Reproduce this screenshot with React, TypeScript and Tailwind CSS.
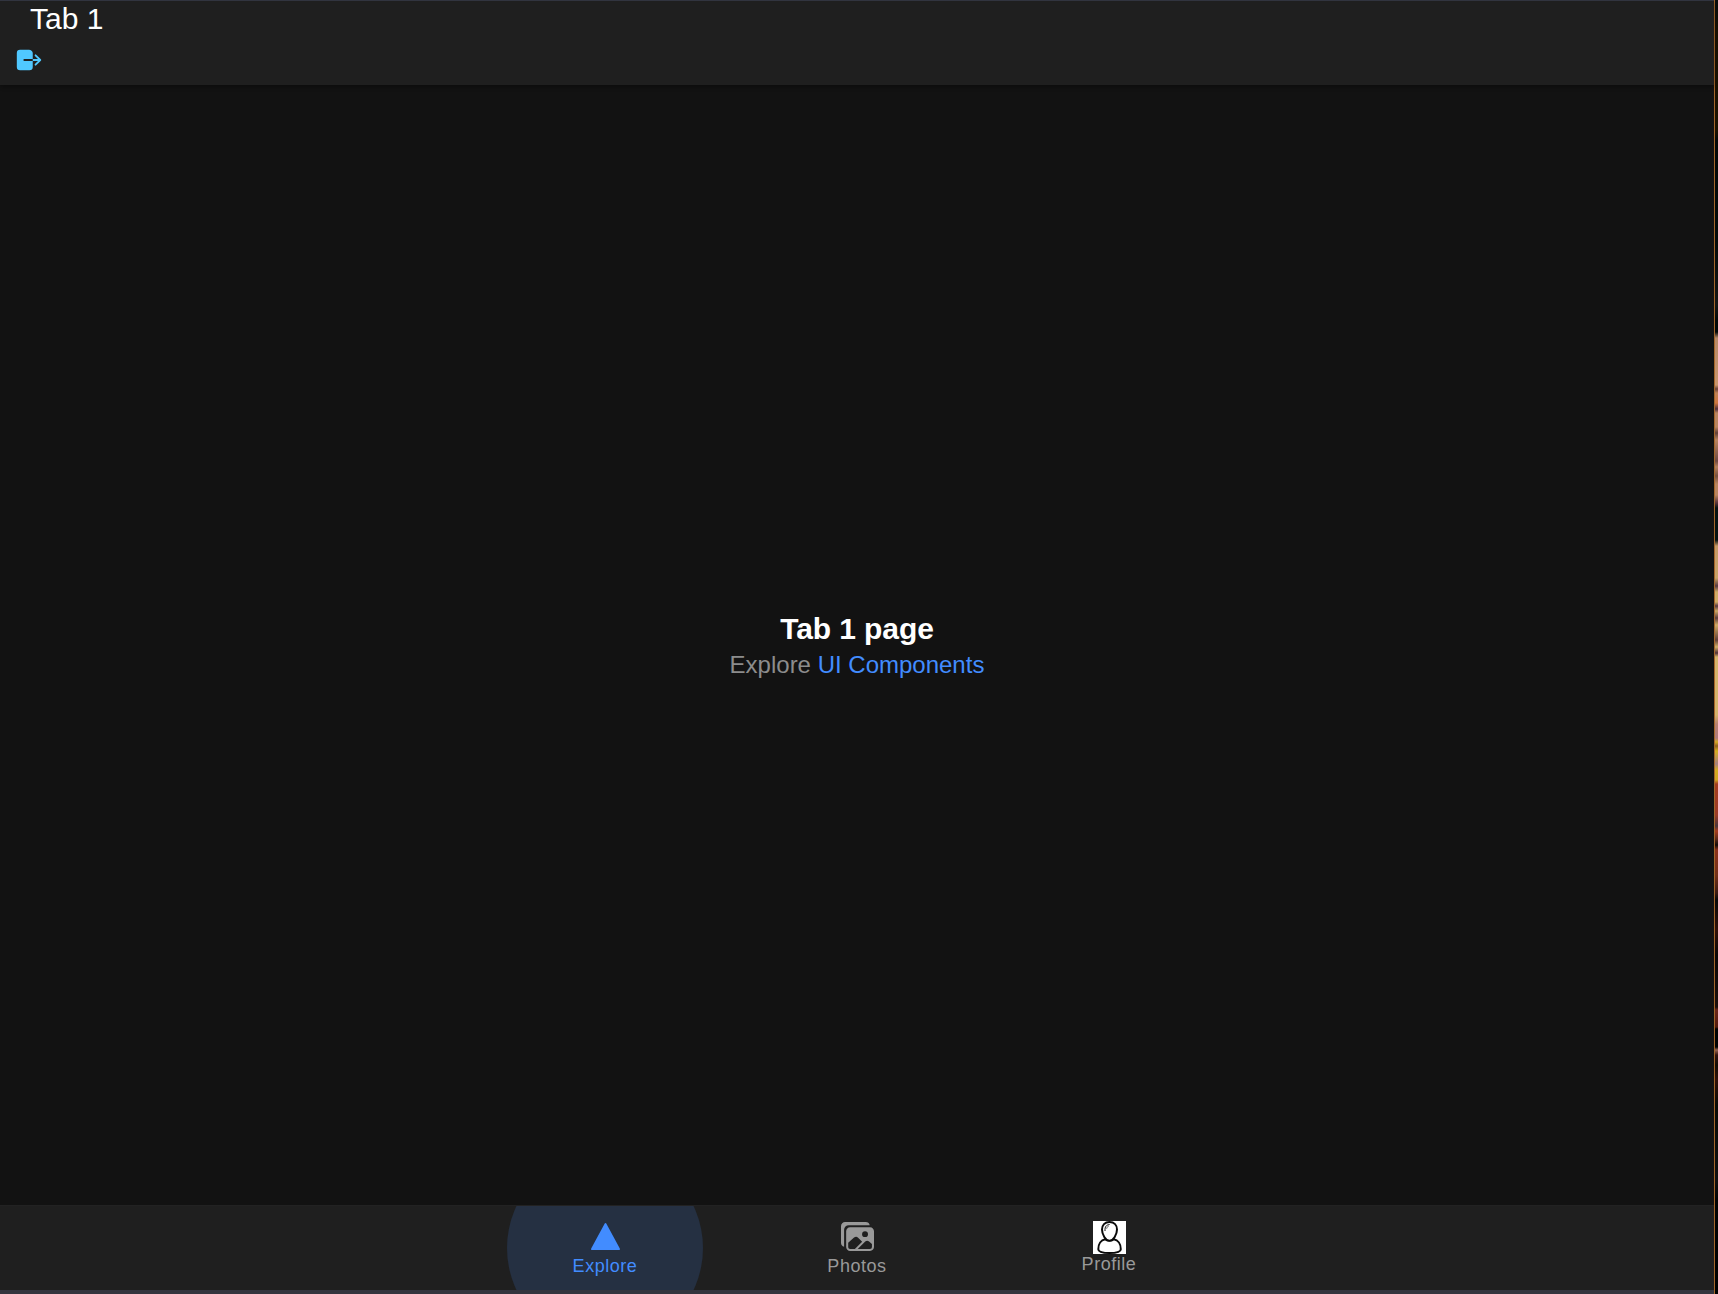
import type { ReactNode } from "react";
import { IoLogOut, IoTriangle, IoImages } from "react-icons/io5";

function ProfilePicture() {
  return (
    <svg width="33" height="33" viewBox="0 0 33 33" className="block shrink-0 bg-white">
      <g fill="#fff" stroke="#0a0a0a" strokeWidth="2" strokeLinecap="round">
        <path d="M12.2 18.3C8 19 5.3 23 5.3 28.2C5.3 31 10 32 16.5 32C23 32 27.8 31 27.8 28.2C27.8 23 25 19 20.8 18.3C19 20 14 20 12.2 18.3Z" />
        <path d="M16.5 1C11.8 1 9 4.2 9 8.5C9 13.2 12.6 19.8 16.5 19.8C20.4 19.8 24 13.2 24 8.5C24 4.2 21.2 1 16.5 1Z" />
        <path d="M12 9.6C11.7 5.7 13.3 3.9 16.2 3.5" fill="none" strokeWidth="1" />
        <path d="M13.7 7.4C14 6 14.7 5.4 15.6 5" fill="none" strokeWidth=".6" />
      </g>
    </svg>
  );
}

function TabButton({ label, active, children, image }: { label: string; active?: boolean; image?: boolean; children: ReactNode }) {
  return (
    <button
      className={`relative flex w-[252px] flex-col items-center overflow-hidden ${image ? "pt-[15px]" : "pt-[14px]"} ${active ? "text-[#428cff]" : "text-[#999999]"}`}
    >
      {active && <span className="absolute -top-[56px] left-[28px] size-[196px] rounded-full bg-[#253042]" />}
      <span className="relative">{children}</span>
      <span className={`relative text-[18px] leading-[22px] tracking-[0.54px] ${image ? "-mt-px" : "mt-[2px]"}`}>{label}</span>
    </button>
  );
}

export default function App() {
  return (
    <div className="flex h-screen w-full overflow-hidden bg-[#121212] font-['Liberation_Sans',Arial,sans-serif]">
      <div className="flex min-w-0 flex-1 flex-col">
        <header className="z-10 h-[85px] shrink-0 border-t border-[#31343f] bg-[#1f1f1f] shadow-[0_2px_4px_rgba(0,0,0,0.3)]">
          <h1 className="pl-[30px] text-[30px] leading-[35px] text-white">Tab 1</h1>
          <button className="ml-[14px] mt-[9px] block text-[#50c8ff]" aria-label="Log out">
            <IoLogOut size={30} />
          </button>
        </header>
        <main className="flex flex-1 flex-col items-center justify-center text-center">
          <strong className="text-[30px] leading-[39px] tracking-[-0.1px] text-white">Tab 1 page</strong>
          <p className="text-[24px] leading-[33px] text-[#8c8c8c]">
            Explore <a className="text-[#428cff]">UI Components</a>
          </p>
        </main>
        <nav className="flex h-[85px] shrink-0 justify-center border-t border-[#222222] bg-[#1f1f1f]">
          <TabButton label="Explore" active>
            <IoTriangle size={33} />
          </TabButton>
          <TabButton label="Photos">
            <IoImages size={33} />
          </TabButton>
          <TabButton label="Profile" image>
            <ProfilePicture />
          </TabButton>
        </nav>
        <div className="h-1 shrink-0 bg-[#35343e]" />
      </div>
      <div className="w-px shrink-0 bg-[#a5662a]" />
      <div className="w-[3px] shrink-0 bg-[linear-gradient(to_bottom,#080c0c_0px,#181003_30px,#1c1200_130px,#040807_140px,#040a09_240px,#161614_305px,#020807_320px,#020807_332px,#b88a68_338px,#c9966e_385px,#6b4238_389px,#c08358_393px,#d07840_403px,#51303a_409px,#b98560_413px,#b98560_427px,#614038_433px,#b98560_440px,#704a42_461px,#b5825f_467px,#76503f_476px,#b98560_484px,#b98560_495px,#55333a_503px,#061211_508px,#061211_540px,#c69a68_546px,#c9a468_578px,#583940_586px,#d0ac68_592px,#d0ac68_602px,#583940_606px,#ccaa68_611px,#5c3d3c_618px,#d0ac68_625px,#604038_640px,#d0b069_647px,#4f3038_653px,#d4b46c_657px,#d4b46c_715px,#b98270_724px,#b07b7b_738px,#d5ab26_742px,#8e6020_746px,#d5b020_751px,#a58080_764px,#d5ac20_770px,#d0a525_780px,#a33d20_784px,#9c3c27_815px,#49363b_826px,#a63d20_831px,#5c2a1a_839px,#120b08_845px,#8b321b_850px,#73311a_875px,#3b1b13_893px,#070808_900px,#301109_930px,#0b0706_955px,#1b0f0c_1007px,#6b271a_1010px,#541b0e_1027px,#000202_1029px,#000202_1047px,#986653_1050px,#321410_1055px,#100c05_1065px,#301109_1080px,#090a05_1105px,#101010_1180px,#020303_1200px,#000_1294px)]" />
    </div>
  );
}
